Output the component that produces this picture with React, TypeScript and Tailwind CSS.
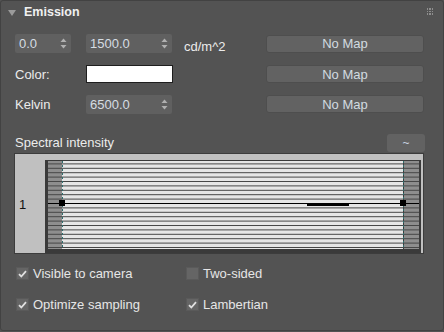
import React from "react";

const font = { fontFamily: '"Liberation Sans", Arial, sans-serif' };

function Spinner({ value, w }: { value: string; w: string }) {
  return (
    <div className={`${w} h-[19px] bg-[#606060] rounded-[2px] flex items-center justify-between pl-[4px] pr-[4px]`}>
      <span className="text-[13px] text-[#d6dde3] leading-none">{value}</span>
      <svg width="7" height="11" viewBox="0 0 7 11">
        <polygon points="3.5,0.5 6.5,4 0.5,4" fill="#b0b0b0" />
        <polygon points="0.5,7 6.5,7 3.5,10.5" fill="#b0b0b0" />
      </svg>
    </div>
  );
}

function NoMap() {
  return (
    <div className="w-[158px] h-[18px] bg-[#626262] border border-[#4e4e4e] rounded-[3px] flex items-center justify-center">
      <span className="text-[13px] text-[#d2dbe0] leading-none">No Map</span>
    </div>
  );
}

function Check({ checked, label }: { checked: boolean; label: string }) {
  return (
    <div className="flex items-center gap-[4px]">
      <div className="w-[13px] h-[13px] bg-[#656565] border border-[#5a5a5a] flex items-center justify-center">
        {checked && (
          <svg width="9" height="8" viewBox="0 0 9 8">
            <path d="M1 4.2 L3.3 6.5 L8 1.2" stroke="#e0e0e0" strokeWidth="1.8" fill="none" />
          </svg>
        )}
      </div>
      <span className="text-[13px] text-[#e6e6e6] leading-none">{label}</span>
    </div>
  );
}

function Plot() {
  const W = 371;
  const H = 88;
  const cy = 42;
  const lines: number[] = [];
  for (let k = -9; k <= 10; k++) {
    if (k === 0) continue;
    lines.push(cy + k * 4.4);
  }
  return (
    <svg width={W} height={H} viewBox={`0 0 ${W} ${H}`} className="block">
      <rect x="0" y="0" width="14" height={H} fill="#8e8e8e" />
      <rect x="14" y="0" width="341" height={H} fill="#e6e6e6" />
      <rect x="356" y="0" width="15" height={H} fill="#8e8e8e" />
      {lines.map((y, i) => (
        <line key={i} x1="0" x2={W} y1={y + 0.5} y2={y + 0.5} stroke="#474747" strokeWidth="1" />
      ))}
      <line x1="14.5" x2="14.5" y1="0" y2={H} stroke="#2d6b6b" strokeWidth="1" strokeDasharray="2 2" />
      <line x1="355.5" x2="355.5" y1="0" y2={H} stroke="#2d6b6b" strokeWidth="1" strokeDasharray="2 2" />
      <line x1="0" x2={W} y1={cy + 0.5} y2={cy + 0.5} stroke="#000" strokeWidth="1.2" />
      <rect x="259" y={cy + 1} width="42" height="2" fill="#000" />
      <rect x="11" y={cy - 3} width="6" height="6" fill="#000" />
      <rect x="352" y={cy - 3} width="6" height="6" fill="#000" />
    </svg>
  );
}

export default function App() {
  return (
    <div style={font} className="w-[444px] h-[332px] bg-[#535353]">
      <div className="w-[444px] h-[331px] border border-[#424242] rounded-[3px] bg-[#535353] flex flex-col">
        {/* header */}
        <div className="h-[23px] flex items-center relative">
          <svg width="8" height="6" viewBox="0 0 8 6" className="ml-[7px] mt-[1px]">
            <polygon points="0,0 8,0 4,6" fill="#9a9a9a" />
          </svg>
          <span className="ml-[8px] text-[12.5px] font-bold text-[#f0f0f0] leading-none">Emission</span>
          <div className="absolute right-[10px] top-[7px] grid grid-cols-3 gap-[1px]">
            {Array.from({ length: 9 }).map((_, i) => (
              <div key={i} className="w-[1.5px] h-[1.5px] bg-[#8e8e8e]" />
            ))}
          </div>
        </div>

        {/* rows */}
        <div className="pl-[14px] mt-[10px] flex flex-col gap-[12px]">
          <div className="flex items-center h-[19px]">
            <div className="w-[71px]">
              <Spinner value="0.0" w="w-[56px]" />
            </div>
            <div className="w-[87px]">
              <Spinner value="1500.0" w="w-[86px]" />
            </div>
            <div className="w-[93px] pl-[11px] pt-[5px]">
              <span className="text-[13px] text-[#ececec] leading-none">cd/m^2</span>
            </div>
            <NoMap />
          </div>
          <div className="flex items-center h-[18px]">
            <div className="w-[71px]">
              <span className="text-[13px] text-[#ececec] leading-none">Color:</span>
            </div>
            <div className="w-[87px]">
              <div className="w-[87px] h-[18px] bg-white border border-[#1e1e1e]" />
            </div>
            <div className="w-[93px]" />
            <NoMap />
          </div>
          <div className="flex items-center h-[18px]">
            <div className="w-[71px]">
              <span className="text-[13px] text-[#ececec] leading-none">Kelvin</span>
            </div>
            <div className="w-[87px]">
              <Spinner value="6500.0" w="w-[86px]" />
            </div>
            <div className="w-[93px]" />
            <NoMap />
          </div>
        </div>

        {/* spectral */}
        <div className="pl-[14px] mt-[21px] flex items-center justify-between w-[424px] h-[18px]">
          <span className="text-[13px] text-[#ececec] leading-none -mt-[2px]">Spectral intensity</span>
          <div className="w-[38px] h-[18px] bg-[#626262] rounded-[3px] flex items-center justify-center">
            <span className="text-[12px] text-[#c8d2e0] leading-none">~</span>
          </div>
        </div>

        <div className="ml-[13px] mt-[1px] w-[410px] h-[101px] border border-[#3c3c3c] bg-[#c0c0c0] flex">
          <div className="w-[30px] flex items-center pl-[4px] pt-[2px]">
            <span className="text-[13px] text-[#111] leading-none">1</span>
          </div>
          <div className="mt-[6px] w-[376px] h-[93px] bg-[#3a3a3a] pl-[3px] pt-[1px]">
            <Plot />
          </div>
        </div>

        {/* checkboxes */}
        <div className="pl-[15px] mt-[13px] grid grid-cols-[170px_1fr] gap-y-[18px]">
          <Check checked label="Visible to camera" />
          <Check checked={false} label="Two-sided" />
          <Check checked label="Optimize sampling" />
          <Check checked label="Lambertian" />
        </div>
      </div>
    </div>
  );
}
